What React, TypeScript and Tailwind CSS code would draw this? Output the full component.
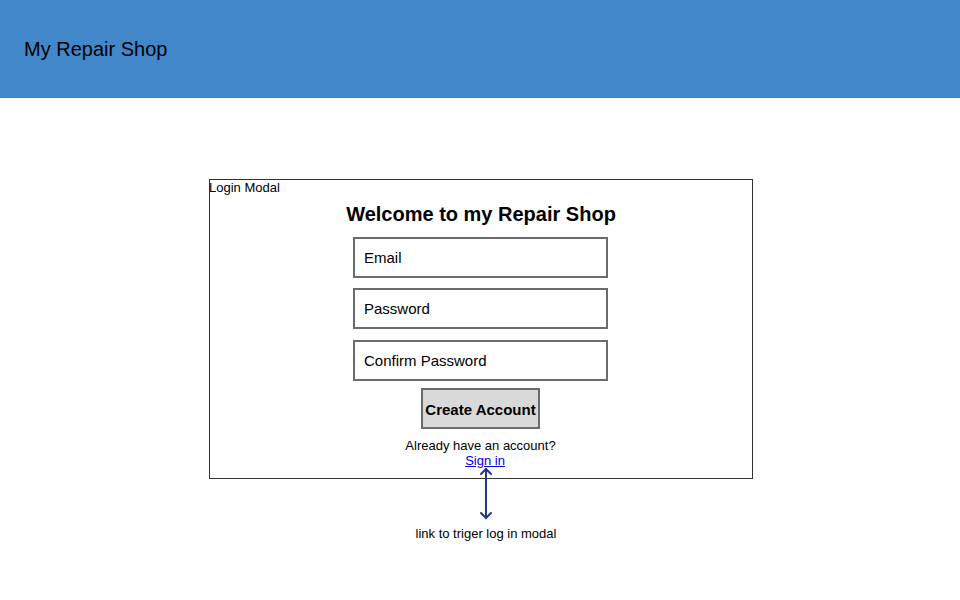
export default function App() {
  return (
    <div className="min-h-[600px] bg-white text-black font-['Liberation_Sans',Arial,sans-serif]">
      {/* Top bar */}
      <header className="h-[98px] bg-[#4387cb] flex items-center pl-6">
        <span className="text-[20px] leading-[28px]">My Repair Shop</span>
      </header>

      {/* Login modal mockup */}
      <div className="relative ml-[209px] mt-[81px] w-[544px]">
        <div className="h-[300px] border border-[#333]">
          <div className="text-[13px] leading-[15px] -ml-px">Login Modal</div>
          <h2 className="mt-[7px] text-center text-[20px] leading-[24px] font-bold">
            Welcome to my Repair Shop
          </h2>
          <div className="flex flex-col items-center pr-px">
            <input
              placeholder="Email"
              className="mt-[11px] w-[255px] h-[41px] border-2 border-[#6b6b6b] pl-[9px] text-[15px] placeholder:text-black outline-none"
            />
            <input
              placeholder="Password"
              type="password"
              className="mt-[10px] w-[255px] h-[41px] border-2 border-[#6b6b6b] pl-[9px] text-[15px] placeholder:text-black outline-none"
            />
            <input
              placeholder="Confirm Password"
              type="password"
              className="mt-[11px] w-[255px] h-[41px] border-2 border-[#6b6b6b] pl-[9px] text-[15px] placeholder:text-black outline-none"
            />
            <button className="mt-[7px] w-[119px] h-[41px] pt-[3px] bg-[#d9d9d9] border-2 border-[#6b6b6b] text-[15px] font-bold">
              Create Account
            </button>
            <p className="mt-[9px] text-[13px] leading-[15px]">Already have an account?</p>
            <a href="#" className="ml-[9px] text-[13px] leading-[15px] text-[#0000ee] underline">
              Sign in
            </a>
          </div>
        </div>

        {/* annotation arrow */}
        <svg
          className="absolute left-[270px] top-[288px]"
          width="14"
          height="54"
          viewBox="0 0 14 54"
          fill="none"
          stroke="#1f3b85"
          strokeWidth="2"
          strokeLinecap="round"
        >
          <path d="M7 2 L7 51" />
          <path d="M2 7 L7 2 L12 7" />
          <path d="M2 46 L7 51 L12 46" />
        </svg>
        <p className="mt-[47px] ml-[8px] text-center text-[13px] leading-[15px] w-[538px]">
          link to triger log in modal
        </p>
      </div>
    </div>
  );
}
